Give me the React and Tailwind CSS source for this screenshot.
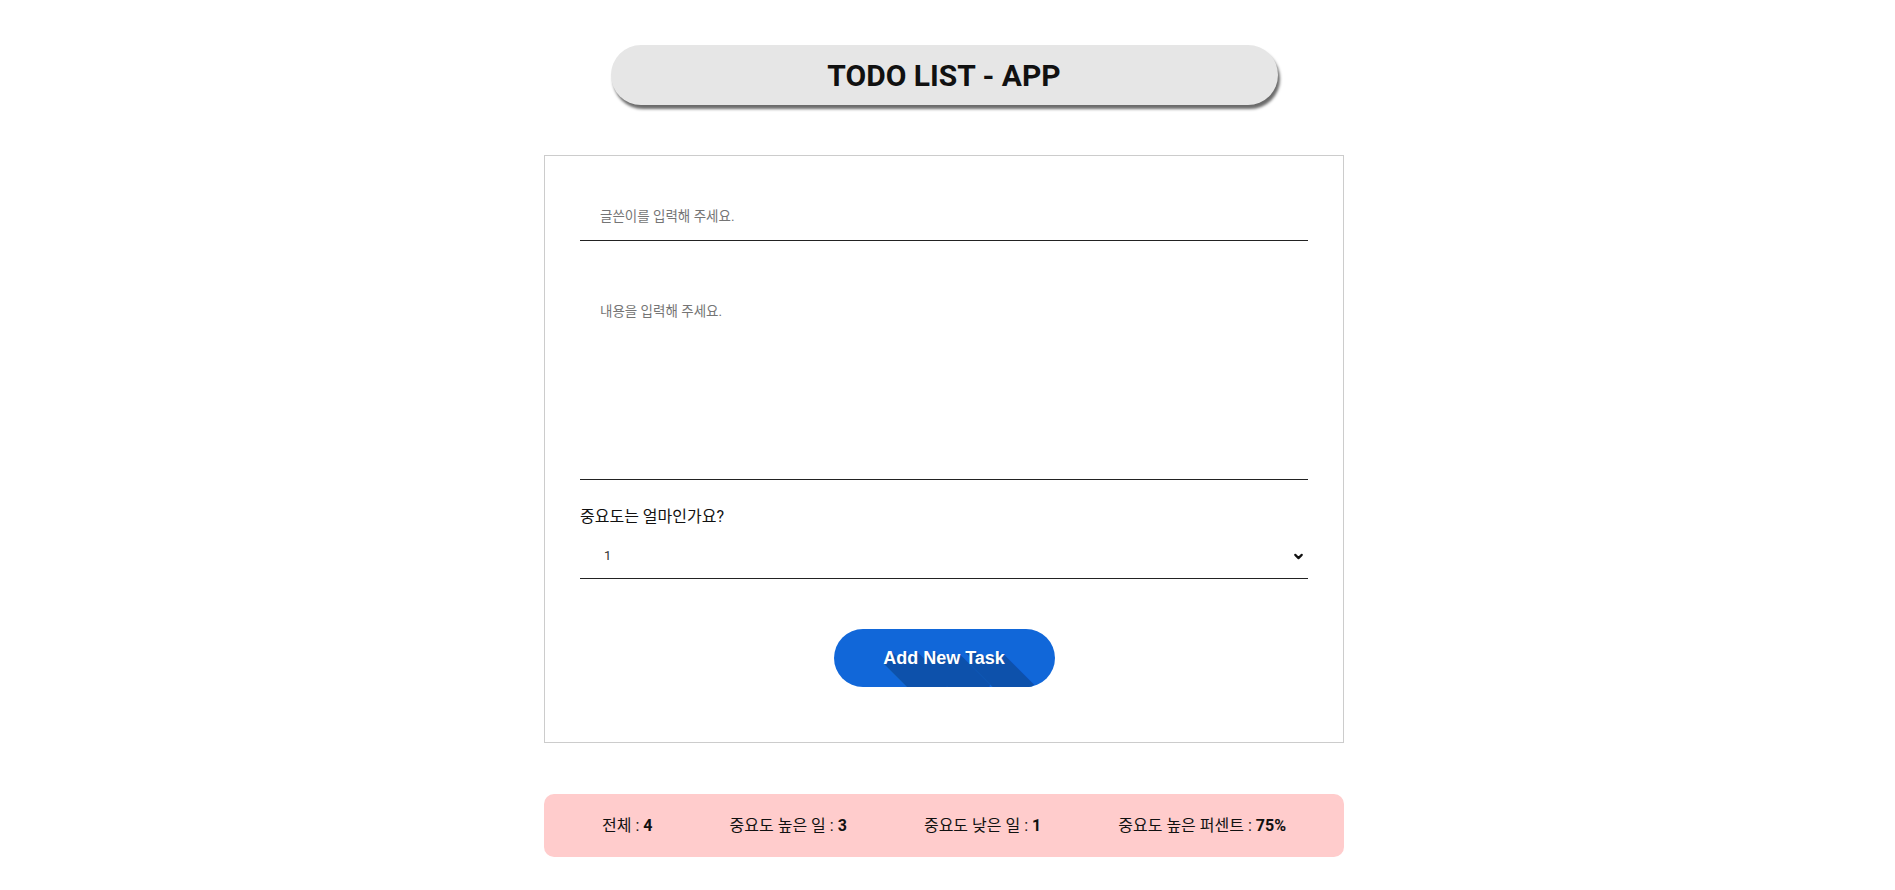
import React, { useState } from 'react'
import { ChevronDown } from 'lucide-react'

const font = "font-['Roboto','Noto_Sans_CJK_KR',sans-serif]"

const stats = [
    { label: '전체', value: '4' },
    { label: '중요도 높은 일', value: '3' },
    { label: '중요도 낮은 일', value: '1' },
    { label: '중요도 높은 퍼센트', value: '75%' },
]

const App = () => {
    const [writer, setWriter] = useState('')
    const [content, setContent] = useState('')
    const [priority, setPriority] = useState('1')

    return (
        <div className={`min-h-screen bg-white flex flex-col items-center pt-[45px] pb-10 pr-[7px] text-[#111] ${font}`}>
            <h1 className="w-[667px] h-[60px] rounded-[30px] bg-[#e6e6e6] shadow-[2px_4px_3px_#6b6b6b] flex items-center justify-center text-[30px] font-bold text-[#111]">
                TODO LIST - APP
            </h1>

            <form
                onSubmit={(e) => e.preventDefault()}
                className="mt-[50px] w-[800px] border border-[#cccccc] px-[35px] pt-[40px] pb-[55px] flex flex-col"
            >
                <input
                    value={writer}
                    onChange={(e) => setWriter(e.target.value)}
                    placeholder="글쓴이를 입력해 주세요."
                    className="h-[45px] w-full border-b border-[#222] px-5 pb-[5px] text-[13.5px] outline-none placeholder:text-[#757575]"
                />
                <textarea
                    value={content}
                    onChange={(e) => setContent(e.target.value)}
                    placeholder="내용을 입력해 주세요."
                    className="mt-[39px] h-[200px] w-full resize-none border-b border-[#222] px-5 pt-[21px] text-[13.5px] outline-none placeholder:text-[#757575]"
                />
                <label className="mt-[25px] text-[16px] text-[#111]">중요도는 얼마인가요?</label>
                <div className="relative mt-[4px]">
                    <select
                        value={priority}
                        onChange={(e) => setPriority(e.target.value)}
                        className="h-[46px] w-full appearance-none border-b border-[#222] bg-white px-6 text-[13px] text-[#333] outline-none"
                    >
                        <option value="1">1</option>
                        <option value="2">2</option>
                        <option value="3">3</option>
                        <option value="4">4</option>
                        <option value="5">5</option>
                    </select>
                    <ChevronDown size={13} strokeWidth={4} className="pointer-events-none absolute right-[3px] top-[17px] text-[#111]" />
                </div>
                <button
                    type="submit"
                    className="mt-[50px] self-center h-[58px] w-[221px] overflow-hidden rounded-full bg-[#1167d9] font-['Liberation_Sans',Arial,sans-serif] text-[18px] font-bold text-white [text-shadow:1px_1px_#0d51ab,2px_2px_#0d51ab,3px_3px_#0d51ab,4px_4px_#0d51ab,5px_5px_#0d51ab,6px_6px_#0d51ab,7px_7px_#0d51ab,8px_8px_#0d51ab,9px_9px_#0d51ab,10px_10px_#0d51ab,11px_11px_#0d51ab,12px_12px_#0d51ab,13px_13px_#0d51ab,14px_14px_#0d51ab,15px_15px_#0d51ab,16px_16px_#0d51ab,17px_17px_#0d51ab,18px_18px_#0d51ab,19px_19px_#0d51ab,20px_20px_#0d51ab,21px_21px_#0d51ab,22px_22px_#0d51ab,23px_23px_#0d51ab,24px_24px_#0d51ab,25px_25px_#0d51ab,26px_26px_#0d51ab,27px_27px_#0d51ab,28px_28px_#0d51ab,29px_29px_#0d51ab,30px_30px_#0d51ab]"
                >
                    Add New Task
                </button>
            </form>

            <div className="mt-[51px] w-[800px] h-[63px] rounded-[10px] bg-[#ffcccc] flex items-center justify-between px-[58px] text-[16px] text-[#111]">
                {stats.map((s) => (
                    <span key={s.label}>
                        {s.label} : <b className="font-bold">{s.value}</b>
                    </span>
                ))}
            </div>
        </div>
    )
}

export default App
